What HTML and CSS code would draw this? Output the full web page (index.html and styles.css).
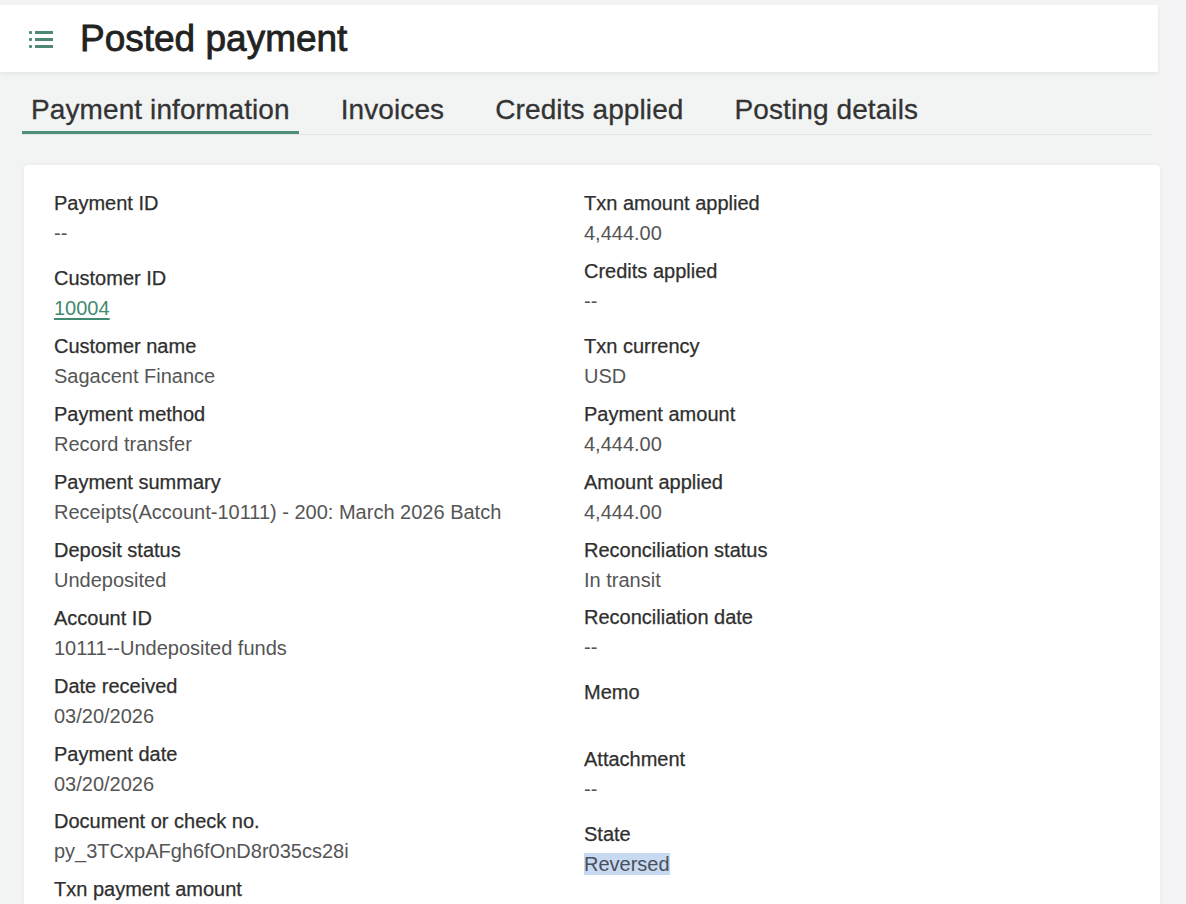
FILE: index.html
```html
<!DOCTYPE html>
<html lang="en">
<head>
    <meta charset="UTF-8">
    <meta name="viewport" content="width=device-width, initial-scale=1.0">
    <title>Posted payment</title>
    <link rel="stylesheet" href="styles.css">
</head>
<body>
    <div class="page">
        <header class="page-header">
            <svg class="list-icon" width="26" height="22" viewBox="0 0 26 22" aria-hidden="true">
                <rect x="2" y="3" width="3" height="3" rx="1"/>
                <rect x="8" y="3" width="18" height="3"/>
                <rect x="2" y="10" width="3" height="3" rx="1"/>
                <rect x="8" y="10" width="18" height="3"/>
                <rect x="2" y="17" width="3" height="3" rx="1"/>
                <rect x="8" y="17" width="18" height="3"/>
            </svg>
            <h1 class="page-title">Posted payment</h1>
        </header>

        <nav class="tabs">
            <a class="tab active" href="#">Payment information</a>
            <a class="tab" href="#">Invoices</a>
            <a class="tab" href="#">Credits applied</a>
            <a class="tab" href="#">Posting details</a>
        </nav>

        <section class="card">
            <div class="column">
                <div class="field tall"><div class="label">Payment ID</div><div class="value">--</div></div>
                <div class="field"><div class="label">Customer ID</div><div class="value"><a class="link" href="#">10004</a></div></div>
                <div class="field"><div class="label">Customer name</div><div class="value">Sagacent Finance</div></div>
                <div class="field"><div class="label">Payment method</div><div class="value">Record transfer</div></div>
                <div class="field"><div class="label">Payment summary</div><div class="value">Receipts(Account-10111) - 200: March 2026 Batch</div></div>
                <div class="field"><div class="label">Deposit status</div><div class="value">Undeposited</div></div>
                <div class="field"><div class="label">Account ID</div><div class="value">10111--Undeposited funds</div></div>
                <div class="field"><div class="label">Date received</div><div class="value">03/20/2026</div></div>
                <div class="field short"><div class="label">Payment date</div><div class="value">03/20/2026</div></div>
                <div class="field"><div class="label">Document or check no.</div><div class="value">py_3TCxpAFgh6fOnD8r035cs28i</div></div>
                <div class="field last"><div class="label">Txn payment amount</div></div>
            </div>
            <div class="column">
                <div class="field"><div class="label">Txn amount applied</div><div class="value">4,444.00</div></div>
                <div class="field tall"><div class="label">Credits applied</div><div class="value">--</div></div>
                <div class="field"><div class="label">Txn currency</div><div class="value">USD</div></div>
                <div class="field"><div class="label">Payment amount</div><div class="value">4,444.00</div></div>
                <div class="field"><div class="label">Amount applied</div><div class="value">4,444.00</div></div>
                <div class="field short"><div class="label">Reconciliation status</div><div class="value">In transit</div></div>
                <div class="field tall"><div class="label">Reconciliation date</div><div class="value">--</div></div>
                <div class="field short"><div class="label">Memo</div><div class="value">&nbsp;</div></div>
                <div class="field tall"><div class="label">Attachment</div><div class="value">--</div></div>
                <div class="field last"><div class="label">State</div><div class="value"><span class="selected">Reversed</span></div></div>
            </div>
        </section>
    </div>
</body>
</html>
```

FILE: styles.css
```css
body {
    margin: 0;
    background-color: #f4f4f6;
    font-family: "Liberation Sans", Arial, sans-serif;
    color: #333;
    overflow: hidden;
}
.page {
    width: 1160px;
    height: 904px;
    padding-top: 5px;
    box-sizing: border-box;
    background-color: #f2f3f3;
}
.page-header {
    display: flex;
    align-items: center;
    width: 1158px;
    height: 67px;
    background-color: #fff;
    box-shadow: 0 2px 4px rgba(0, 0, 0, 0.06);
}
.list-icon {
    fill: #4e8a73;
    margin-left: 27px;
    margin-right: 27px;
}
.page-title {
    margin: 0;
    font-size: 37px;
    font-weight: normal;
    color: #222;
    -webkit-text-stroke: 0.8px #222;
}
.tabs {
    display: flex;
    gap: 33px;
    margin: 0 8px 0 22px;
    padding-top: 21px;
    border-bottom: 1px solid #e3e4e4;
}
.tab {
    padding: 0 9px 4px;
    font-size: 28px;
    line-height: 34px;
    letter-spacing: 0.1px;
    color: #333;
    text-decoration: none;
    -webkit-text-stroke: 0.3px #333;
    border-bottom: 3px solid transparent;
}
.tab.active {
    border-bottom-color: #4e8f77;
}
.card {
    display: grid;
    grid-template-columns: 530px 1fr;
    margin: 30px 0 0 24px;
    padding: 26px 30px 20px;
    background-color: #fff;
    border-radius: 4px;
    box-shadow: 0 0 4px rgba(0, 0, 0, 0.05);
}
.field {
    padding-bottom: 14px;
}
.field.tall {
    padding-bottom: 21px;
}
.field.short {
    padding-bottom: 13px;
}
.field.last {
    padding-bottom: 0;
}
.label {
    font-size: 20px;
    line-height: 24px;
    color: #2f2f2f;
    -webkit-text-stroke: 0.25px #2f2f2f;
}
.value {
    margin-top: 6px;
    font-size: 20px;
    line-height: 24px;
    color: #555;
}
.link {
    color: #3f8b70;
    text-decoration: underline;
    text-underline-offset: 3px;
}
.selected {
    background-color: #c8daf2;
    color: #4a4f5a;
}
```
